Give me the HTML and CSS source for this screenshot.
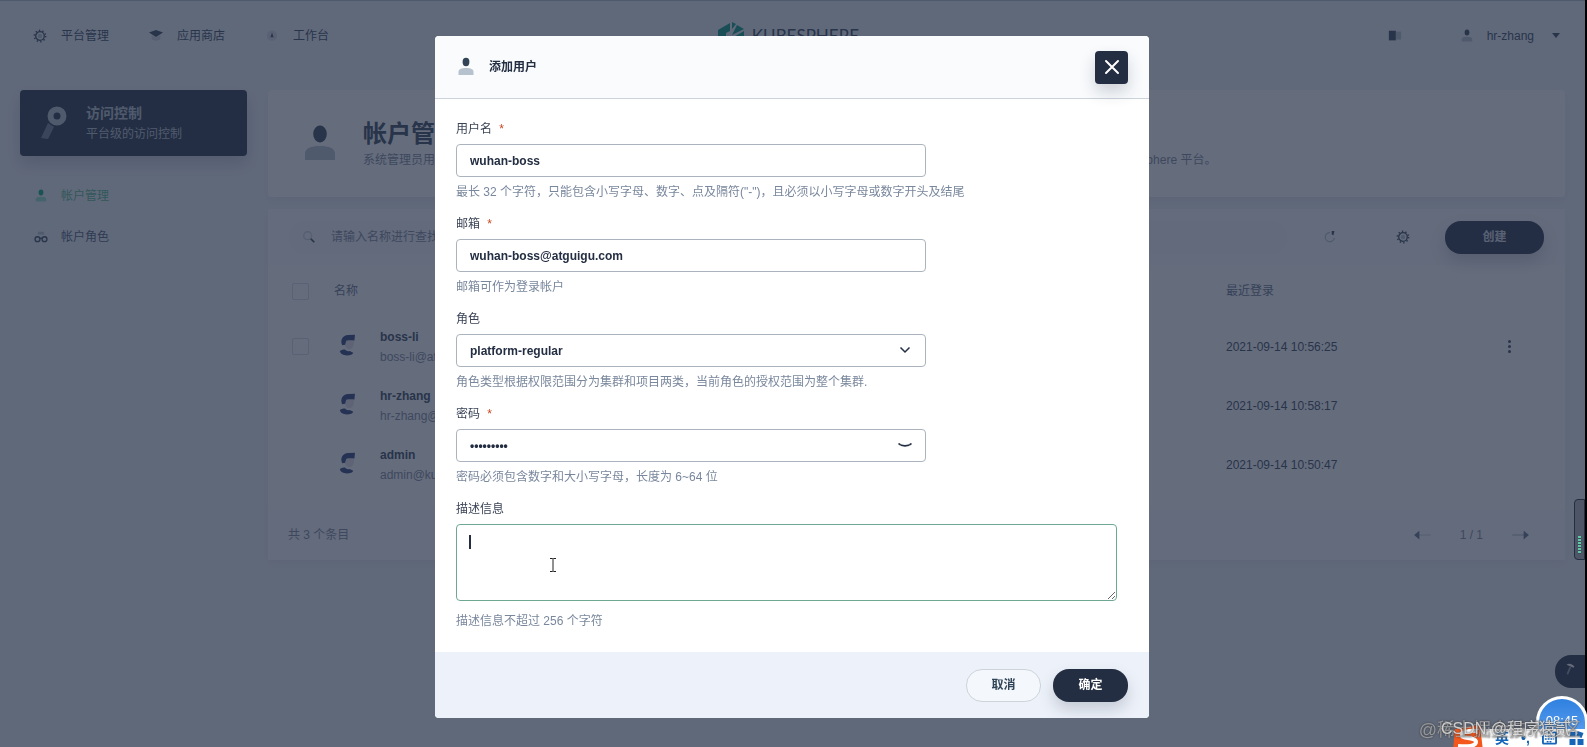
FILE: index.html
```html
<!DOCTYPE html>
<html lang="zh-CN">
<head>
  <meta charset="UTF-8" />
  <meta name="viewport" content="width=device-width, initial-scale=1.0" />
  <title>帐户管理 - KubeSphere</title>
  <link rel="stylesheet" href="styles.css">
</head>
<body>
  <!-- icons shared by several places -->
  <svg class="sprite" aria-hidden="true">
    <symbol id="icon-user" viewBox="0 0 20 20">
      <ellipse cx="10" cy="5" rx="3.4" ry="4.2" fill="var(--icon-dark)" />
      <path d="M2.500 18v-3c0-3 3-4 7.500-4s7.500 1 7.500 4v3z" fill="var(--icon-light)" />
    </symbol>
    <symbol id="icon-gear" viewBox="0 0 16 16">
      <circle cx="8" cy="8" r="4.900" fill="none" stroke="var(--icon-dark)" stroke-width="1.500" />
      <circle cx="8" cy="8" r="6.400" fill="none" stroke="var(--icon-dark)" stroke-width="1.800" stroke-dasharray="1.500 2.521" />
      <circle cx="8" cy="8" r="2.500" fill="var(--icon-light)" />
    </symbol>
    <symbol id="icon-avatar" viewBox="0 0 24 24">
      <path d="M9 6h8c.6 4-.6 7.500-4 8-2.400 0-4-3-4-5z" fill="#e6e4e6" />
      <path d="M7 10.500C5 6 7.500 2 12 1.800l6-.3-.5 5c-3-.3-5-.3-7 .2L9.500 10z" fill="#2a3f78" />
      <path d="M5 15.500c1.500-1 3-1.300 4.500-1.300 1 1.300 2.500 1.800 4 1.300l3 1.500c-.5 1.500-2.500 2.200-5.500 2.200-3 0-5.500-1.200-6-3.700z" fill="#2a3f78" />
    </symbol>
  </svg>

  <header class="topbar">
    <nav class="topnav">
      <a href="#">
        <svg class="icon"><use href="#icon-gear" /></svg>
        平台管理
      </a>
      <a href="#">
        <svg class="icon" viewBox="0 0 16 16"><path d="M0 4l8-3 8 3-8 5z" fill="#324558" /><path d="M3 7v5l5 1.500 5-1.500V7l-5 3z" fill="#ced6dd" /></svg>
        应用商店
      </a>
      <a href="#">
        <svg class="icon" viewBox="0 0 16 16"><circle cx="8" cy="7.500" r="6" fill="#d5dce3" /><path d="M8 4l1.800 5.500H6.200z" fill="#324558" /></svg>
        工作台
      </a>
    </nav>
    <div class="logo">
      <svg viewBox="0 0 26 28"><path d="M0 8l12-7v8L8 11v6l-8 3zM14 0l4 2-4 5zM19 3l7 4-12 6zM26 9v12L13 28 1 22l13-6z" fill="#009a80" /></svg>
      <span>KUBESPHERE</span>
    </div>
    <div class="account">
      <svg class="icon" viewBox="0 0 16 16"><path d="M1 2h8v11H1z" fill="#324558" /><path d="M9 3h6v9H9z" fill="#b6c2cd" /></svg>
      <button class="account-menu" type="button">
        <svg class="icon"><use href="#icon-user" /></svg>
        hr-zhang
        <i class="caret"></i>
      </button>
    </div>
  </header>

  <div class="page">
    <aside class="sidebar">
      <div class="sidebar-title">
        <svg viewBox="0 0 40 40"><path d="M14 20l6 4-6 12-7-1z" fill="#6f7c90" /><circle cx="23" cy="13" r="6.500" fill="none" stroke="#b6c2cd" stroke-width="6" /></svg>
        <div>
          <strong>访问控制</strong>
          <p>平台级的访问控制</p>
        </div>
      </div>
      <nav class="menu">
        <a href="#" class="active">
          <svg class="icon"><use href="#icon-user" /></svg>
          帐户管理
        </a>
        <a href="#">
          <svg class="icon" viewBox="0 0 16 16"><path d="M4 5l1-3h6l1 3z" fill="#b6c2cd" /><g fill="none" stroke="#324558" stroke-width="1.500"><circle cx="4" cy="10.500" r="2.800" /><circle cx="12" cy="10.500" r="2.800" /><path d="M6.500 9.500h3" /></g></svg>
          帐户角色
        </a>
      </nav>
    </aside>

    <main class="content">
      <section class="banner">
        <div class="banner-icon"><svg><use href="#icon-user" /></svg></div>
        <div>
          <h1>帐户管理</h1>
          <p>系统管理员用户帐户的集中管理页面&#xFF0C;可在此创建帐户、修改帐户信息以及为帐户分配平台角色&#xFF0C;受邀成员可凭帐户名称或邮箱地址登录使用 KubeSphere 平台。</p>
        </div>
      </section>

      <section class="panel">
        <div class="toolbar">
          <label class="search">
            <svg class="icon" viewBox="0 0 16 16"><circle cx="6.500" cy="6.500" r="4.500" fill="none" stroke="#c9d2db" stroke-width="1.500" /><path d="M10 10l4 4" stroke="#324558" stroke-width="2" /></svg>
            <input type="text" placeholder="请输入名称进行查找" aria-label="请输入名称进行查找">
          </label>
          <div class="tools">
            <button class="tool" type="button" aria-label="刷新">
              <svg class="icon" viewBox="0 0 16 16"><path d="M8 3a5.200 5.200 0 1 0 5 6" fill="none" stroke="#b6c2cd" stroke-width="1.500" /><path d="M10 1l3 0-1 5-2-1z" fill="#324558" /></svg>
            </button>
            <button class="tool" type="button" aria-label="设置">
              <svg class="icon"><use href="#icon-gear" /></svg>
            </button>
          </div>
          <button class="btn btn-dark btn-create" type="button">创建</button>
        </div>

        <table>
          <thead>
            <tr>
              <th class="col-check"><input type="checkbox" aria-label="全选"></th>
              <th>名称</th>
              <th class="col-date">最近登录</th>
              <th class="col-more"></th>
            </tr>
          </thead>
          <tbody>
            <tr>
              <td class="col-check"><input type="checkbox" aria-label="boss-li"></td>
              <td>
                <div class="user">
                  <svg><use href="#icon-avatar" /></svg>
                  <div><strong>boss-li</strong><p>boss-li@atguigu.com</p></div>
                </div>
              </td>
              <td class="col-date">2021-09-14 10:56:25</td>
              <td class="col-more">
                <button class="more" type="button" aria-label="更多"><i></i><i></i><i></i></button>
              </td>
            </tr>
            <tr>
              <td class="col-check"></td>
              <td>
                <div class="user">
                  <svg><use href="#icon-avatar" /></svg>
                  <div><strong>hr-zhang</strong><p>hr-zhang@atguigu.com</p></div>
                </div>
              </td>
              <td class="col-date">2021-09-14 10:58:17</td>
              <td class="col-more"></td>
            </tr>
            <tr>
              <td class="col-check"></td>
              <td>
                <div class="user">
                  <svg><use href="#icon-avatar" /></svg>
                  <div><strong>admin</strong><p>admin@kubesphere.io</p></div>
                </div>
              </td>
              <td class="col-date">2021-09-14 10:50:47</td>
              <td class="col-more"></td>
            </tr>
          </tbody>
        </table>

        <div class="pagination">
          <span>共 3 个条目</span>
          <div class="pager">
            <button type="button" aria-label="上一页"><svg class="icon" viewBox="0 0 20 16"><path d="M6 8h14" stroke="#d5dce3" stroke-width="1.500" /><path d="M7 3v10L1 8z" fill="#5f708a" /></svg></button>
            <span>1 / 1</span>
            <button type="button" aria-label="下一页"><svg class="icon" viewBox="0 0 20 16"><path d="M0 8h14" stroke="#b6c2cd" stroke-width="1.500" /><path d="M13 3v10l6-5z" fill="#5f708a" /></svg></button>
          </div>
        </div>
      </section>
    </main>
  </div>

  <button class="toolbox" type="button" aria-label="工具箱">
    <svg class="icon" viewBox="0 0 16 16"><path d="M4 3c3-2 6-1 9 2l-1 1.500-3-1.500z" fill="#fff" /><path d="M8.500 5.500 5 14" stroke="#8a96a8" stroke-width="2" /></svg>
  </button>

  <div class="overlay">
    <form class="modal" role="dialog" aria-labelledby="modal-title">
      <div class="modal-header">
        <svg class="modal-icon"><use href="#icon-user" /></svg>
        <h2 id="modal-title">添加用户</h2>
        <button class="close" type="button" aria-label="关闭">
          <svg viewBox="0 0 16 16"><path d="M2 2l12 12M14 2 2 14" stroke="#fff" stroke-width="2" stroke-linecap="round" /></svg>
        </button>
      </div>

      <div class="modal-body">
        <div class="field">
          <label for="username">用户名 <em>*</em></label>
          <div class="control"><input id="username" type="text" value="wuhan-boss"></div>
          <p>最长 32 个字符&#xFF0C;只能包含小写字母、数字、点及隔符("-")&#xFF0C;且必须以小写字母或数字开头及结尾</p>
        </div>
        <div class="field">
          <label for="email">邮箱 <em>*</em></label>
          <div class="control"><input id="email" type="text" value="wuhan-boss@atguigu.com"></div>
          <p>邮箱可作为登录帐户</p>
        </div>
        <div class="field">
          <label for="role">角色</label>
          <div class="control">
            <select id="role"><option>platform-regular</option></select>
            <svg class="suffix" viewBox="0 0 16 16"><path d="M3.500 5.500 8 10l4.500-4.500" fill="none" stroke="#242e42" stroke-width="1.500" /></svg>
          </div>
          <p>角色类型根据权限范围分为集群和项目两类&#xFF0C;当前角色的授权范围为整个集群.</p>
        </div>
        <div class="field">
          <label for="password">密码 <em>*</em></label>
          <div class="control">
            <input id="password" type="password" value="P@ssw0rd1">
            <svg class="suffix" viewBox="0 0 16 16"><path d="M1.500 6.500c3 3.200 10 3.200 13 0" fill="none" stroke="#242e42" stroke-width="1.800" /><path d="M3 9l1-1.500M13 9l-1-1.500" stroke="#8a96a8" /></svg>
          </div>
          <p>密码必须包含数字和大小写字母&#xFF0C;长度为 6~64 位</p>
        </div>
        <div class="field field-wide">
          <label for="desc">描述信息</label>
          <div class="control">
            <textarea id="desc"></textarea>
            <i class="text-caret"></i>
            <svg class="pointer" viewBox="0 0 8 16"><path d="M1 1.500h2.500L4 2l.5-.5H7M4 2v12M1 14.500h2.500L4 14l.5.5H7" fill="none" stroke="#222" /></svg>
          </div>
          <p>描述信息不超过 256 个字符</p>
        </div>
      </div>

      <div class="modal-footer">
        <button class="btn btn-light" type="button">取消</button>
        <button class="btn btn-dark" type="submit">确定</button>
      </div>
    </form>
  </div>

  <!-- desktop widgets floating over the browser -->
  <div class="meter"><i></i></div>
  <div class="clock">08:45</div>
  <div class="ime">
    <svg class="ime-logo" viewBox="0 0 30 26"><path d="M2 4 27 0l3 26H0z" fill="#f4571c" /><path d="M24 6C16 5 8 7 9 11c1 3 14 1 14 6 0 4-8 5-18 4" fill="none" stroke="#fff" stroke-width="4" /></svg>
    <span>英</span>
    <span>•,</span>
    <svg viewBox="0 0 16 14"><rect x="1" y="1" width="14" height="12" rx="1" fill="none" stroke="#1565b8" stroke-width="2" /><path d="M3 5h10M3 8h10M5 11h6" stroke="#1565b8" stroke-width="1.500" stroke-dasharray="2 1" /></svg>
    <svg viewBox="0 0 14 14"><path d="M0 1h6v5H0zM8 0l6 2-2 5-5-2zM0 8h6v6H0zM8 8h6v6H8z" fill="#1565b8" /></svg>
  </div>
  <div class="watermark watermark-back">@稀土掘金技术社区</div>
  <div class="watermark">CSDN @程序猿贰</div>
</body>
</html>
```

FILE: styles.css
```css
* {
  box-sizing: border-box;
  margin: 0;
  padding: 0;
}

body {
  --icon-dark: #324558;
  --icon-light: #b6c2cd;
  min-height: 100vh;
  overflow: hidden;
  border-right: 2px solid #000;
  background-color: #eff4f9;
  color: #324558;
  font-family: "Liberation Sans", "Noto Sans CJK SC", sans-serif;
  font-size: 12px;
  line-height: 20px;
}

a {
  color: inherit;
  text-decoration: none;
}

button,
input,
select,
textarea {
  font: inherit;
  color: inherit;
}

button {
  border: none;
  background: none;
}

.sprite {
  position: absolute;
  width: 0;
  height: 0;
}

.icon {
  flex: none;
  width: 14px;
  height: 14px;
}

/* top bar */
.topbar {
  display: grid;
  grid-template-columns: 1fr auto 1fr;
  align-items: center;
  height: 70px;
  padding: 0 20px 0 12px;
  border-top: 1px solid #b6c2cd;
}

.topnav {
  display: flex;
  gap: 40px;
  padding-left: 21px;
}

.topnav a {
  display: flex;
  align-items: center;
  gap: 14px;
}

.logo {
  display: flex;
  align-items: center;
  gap: 8px;
  font-family: Lato, sans-serif;
  font-size: 17px;
}

.logo svg {
  width: 26px;
  height: 28px;
}

.account {
  display: flex;
  justify-content: flex-end;
  align-items: center;
  gap: 58px;
}

.account-menu {
  display: flex;
  align-items: center;
  gap: 13px;
}

.caret {
  margin: 0 5px;
  border: 4px solid transparent;
  border-top: 5px solid #324558;
  border-bottom: none;
}

.page {
  display: flex;
  gap: 21px;
  padding: 20px 20px 0;
}

/* sidebar */
.sidebar {
  flex: none;
  width: 227px;
}

.sidebar-title {
  display: flex;
  align-items: center;
  gap: 12px;
  height: 66px;
  padding: 0 14px;
  border-radius: 4px;
  background-color: #242e42;
  color: #b6c2cd;
  box-shadow: 0 8px 16px rgba(36, 46, 66, 0.2);
}

.sidebar-title svg {
  width: 40px;
  height: 40px;
}

.sidebar-title strong {
  font-size: 14px;
}

.menu {
  display: flex;
  flex-direction: column;
  gap: 21px;
  padding: 30px 14px;
  color: #4a5974;
}

.menu a {
  display: flex;
  align-items: center;
  gap: 13px;
}

.menu .active {
  --icon-dark: #00aa72;
  --icon-light: #90e0c5;
  color: #55bc8a;
}

/* content */
.content {
  flex: 1;
  min-width: 0;
}

.banner {
  display: flex;
  align-items: center;
  gap: 23px;
  height: 107px;
  padding: 0 32px;
  border-radius: 4px;
  background-color: #fff;
  box-shadow: 0 4px 8px rgba(36, 46, 66, 0.06);
}

.banner-icon {
  line-height: 0;
}

.banner-icon svg {
  width: 40px;
  height: 40px;
}

.banner h1 {
  font-size: 24px;
  line-height: 32px;
}

.banner p {
  color: #79879c;
  white-space: nowrap;
}

.panel {
  margin-top: 12px;
  border-radius: 4px;
  background-color: #fff;
  box-shadow: 0 4px 8px rgba(36, 46, 66, 0.06);
}

.toolbar {
  display: flex;
  align-items: center;
  gap: 26px;
  height: 56px;
  padding: 0 21px;
  background-color: #f9fbfd;
}

.search {
  display: flex;
  flex: 1;
  align-items: center;
  gap: 15px;
  height: 33px;
  padding: 0 13px;
  border-radius: 16px;
  background-color: #f4f7fb;
}

.search input {
  flex: 1;
  border: none;
  background: none;
}

.search input::placeholder {
  color: #79879c;
}

.tools {
  display: flex;
  gap: 40px;
}

.tool {
  width: 33px;
  height: 33px;
  line-height: 0;
}

.btn {
  min-width: 75px;
  height: 33px;
  border-radius: 16px;
  font-weight: bold;
}

.btn-dark {
  background-color: #242e42;
  color: #fff;
  box-shadow: 0 8px 16px rgba(36, 46, 66, 0.2);
}

.btn-light {
  border: 1px solid #ccd3db;
  background-color: #f4f7fc;
}

.btn-create {
  width: 99px;
  color: #d5dce3;
}

table {
  width: 100%;
  border-collapse: collapse;
  table-layout: fixed;
}

th {
  height: 52px;
  color: #5f708a;
  font-weight: normal;
  text-align: left;
}

td {
  height: 59px;
}

.col-check {
  width: 66px;
  padding-left: 24px;
  line-height: 0;
}

.col-date {
  width: 270px;
}

.col-more {
  width: 69px;
}

input[type="checkbox"] {
  appearance: none;
  width: 17px;
  height: 17px;
  border: 1px solid #d5dce3;
  border-radius: 2px;
}

.user {
  display: flex;
  align-items: center;
  gap: 18px;
}

.user svg {
  width: 28px;
  height: 28px;
}

.user p {
  color: #79879c;
}

.more {
  display: flex;
  flex-direction: column;
  gap: 2px;
  padding: 4px 12px;
}

.more i {
  width: 3px;
  height: 3px;
  border-radius: 50%;
  background-color: #324558;
}

.pagination {
  display: flex;
  justify-content: space-between;
  align-items: center;
  height: 50px;
  margin-top: 16px;
  padding: 0 34px 0 20px;
  background-color: #f9fbfd;
  color: #79879c;
}

.pager {
  display: flex;
  align-items: center;
  gap: 28px;
}

.pager button {
  line-height: 0;
}

.pager .icon {
  width: 20px;
}

.toolbox {
  position: fixed;
  right: 2px;
  bottom: 59px;
  width: 30px;
  height: 33px;
  border-radius: 16px 0 0 16px;
  background-color: #242e42;
}

/* dialog */
.overlay {
  position: fixed;
  inset: 0 2px 0 0;
  padding: 36px 1px 0 0;
  background-color: rgba(36, 46, 68, 0.7);
}

.modal {
  width: 45%;
  min-width: 714px;
  margin: 0 auto;
  border-radius: 4px;
  background-color: #fff;
  overflow: hidden;
}

.modal-header {
  display: flex;
  align-items: center;
  height: 63px;
  padding: 0 21px;
  border-bottom: 1px solid #ccd3db;
  background-color: #f9fbfd;
}

.modal-icon {
  width: 20px;
  height: 20px;
}

.modal-header h2 {
  flex: 1;
  padding-left: 13px;
  color: #242e42;
  font-size: 12px;
}

.close {
  width: 33px;
  height: 33px;
  border-radius: 4px;
  background-color: #242e42;
  box-shadow: 0 8px 16px rgba(36, 46, 66, 0.2);
  line-height: 0;
}

.close svg {
  width: 16px;
  height: 16px;
}

.modal-body {
  display: flex;
  flex-direction: column;
  gap: 12px;
  padding: 20px 32px 21px 21px;
}

.field {
  display: flex;
  flex-direction: column;
  gap: 5px;
}

.field label {
  color: #3a4356;
}

.field em {
  margin-left: 4px;
  color: #ca4621;
  font-style: normal;
}

.field p {
  color: #79879c;
  white-space: nowrap;
}

.control {
  position: relative;
  width: 470px;
}

.control input,
.control select,
.control textarea {
  display: block;
  width: 100%;
  height: 33px;
  padding: 0 13px;
  border: 1px solid #abb4be;
  border-radius: 4px;
  outline: none;
  background-color: #fff;
  color: #242e42;
  font-weight: bold;
  appearance: none;
}

.field-wide .control {
  width: 100%;
}

.control textarea {
  height: 77px;
  padding: 8px 13px;
  border-color: #6fa892;
  resize: vertical;
}

.field-wide p {
  padding-top: 5px;
}

.suffix {
  position: absolute;
  top: 8px;
  right: 13px;
  width: 16px;
  height: 16px;
}

.text-caret {
  position: absolute;
  top: 11px;
  left: 13px;
  width: 2px;
  height: 14px;
  background-color: #242e42;
}

.pointer {
  position: absolute;
  top: 33px;
  left: 93px;
  width: 8px;
  height: 16px;
}

.modal-footer {
  display: flex;
  justify-content: flex-end;
  align-items: center;
  gap: 12px;
  height: 66px;
  padding: 0 21px;
  background-color: #edf2fa;
}

/* desktop widgets */
.meter {
  position: fixed;
  right: 2px;
  bottom: 187px;
  display: flex;
  align-items: flex-end;
  width: 11px;
  height: 61px;
  padding: 5px 3px;
  border: 1px solid #242e42;
  border-radius: 4px 0 0 4px;
  background-color: #4d5566;
}

.meter i {
  width: 5px;
  height: 18px;
  background: repeating-linear-gradient(#5fc9a5 0 2px, #3b4a5c 2px 3px);
}

.clock {
  position: fixed;
  right: -1px;
  bottom: 0;
  width: 52px;
  height: 51px;
  padding-top: 12px;
  border: 3px solid #fff;
  border-radius: 26px 26px 0 0;
  background: linear-gradient(#2f80e0, #63a6f2);
  color: #fff;
  font-size: 13px;
  text-align: center;
}

.ime {
  position: fixed;
  right: 2px;
  bottom: 0;
  display: flex;
  align-items: center;
  gap: 12px;
  width: 132px;
  height: 18px;
  padding-right: 5px;
  background: linear-gradient(90deg, transparent 28px, #fff 28px);
  color: #1565b8;
  font-size: 14px;
  font-weight: bold;
}

.ime svg {
  flex: none;
  width: 15px;
  height: 14px;
}

.ime .ime-logo {
  width: 30px;
  height: 26px;
}

.watermark {
  position: fixed;
  right: 16px;
  bottom: 8px;
  color: rgba(240, 240, 240, 0.8);
  font-size: 16px;
  text-shadow: 0 0 2px #333;
}

.watermark-back {
  right: 6px;
  bottom: 7px;
  color: rgba(200, 200, 200, 0.6);
  font-size: 18px;
}
```
